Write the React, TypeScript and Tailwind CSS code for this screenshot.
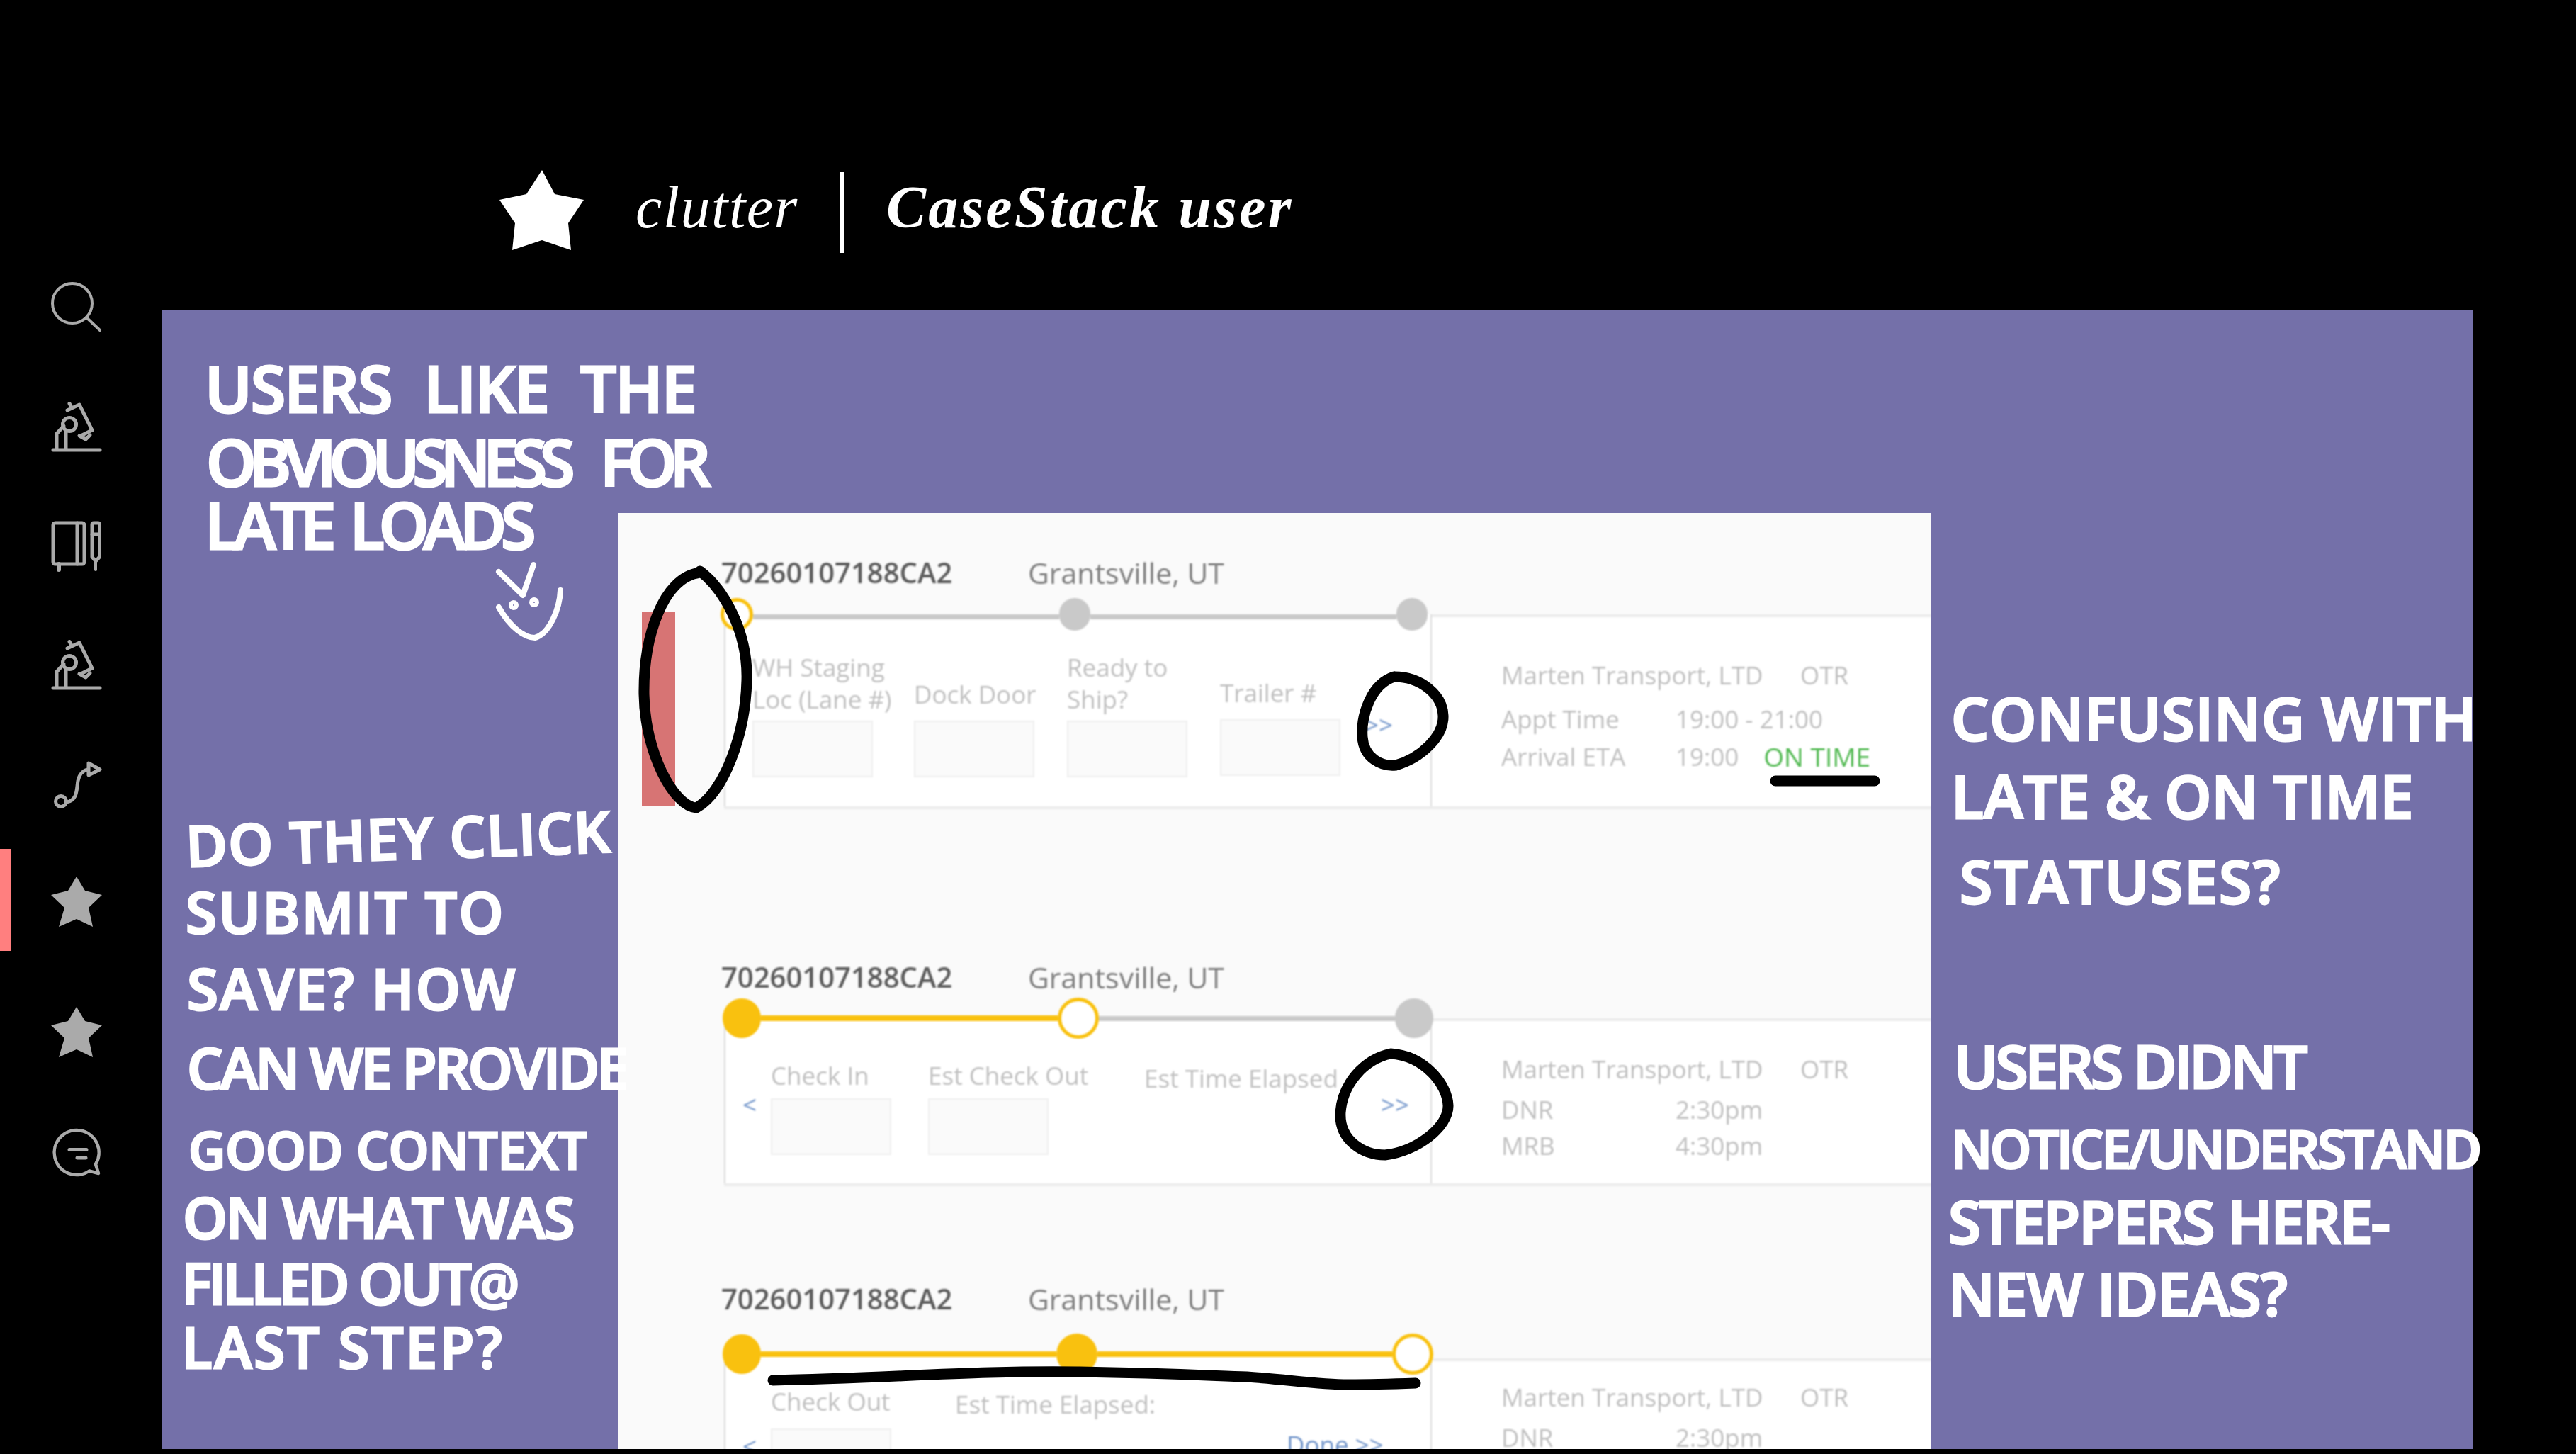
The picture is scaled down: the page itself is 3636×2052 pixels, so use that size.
import React from "react";

const Note = ({ className, children }: { className: string; children: React.ReactNode }) => (
  <div className={"absolute whitespace-nowrap leading-none font-semibold text-white font-['Open_Sans',sans-serif] [-webkit-text-stroke:3px_#ffffff] " + className}>{children}</div>
);

const Star = () => (
  <svg width="72" height="72" viewBox="0 0 72 72" className="block">
    <polygon fill="#aaaaaa" points="36,0 48,20 72,26 53,44 59,71 36,60 11,71 19,44 0,26 24,20" />
  </svg>
);

const Micro = () => (
  <svg width="72" height="72" viewBox="12 12 72 72" fill="none" stroke="#aaaaaa" strokeWidth="5" strokeLinecap="round" strokeLinejoin="round" className="block">
    <path d="M15 80H81" />
    <circle cx="38" cy="44" r="9.5" />
    <path d="M33 54V78M20 78V57L30 46" />
    <path d="M35 24L52 16L70 52L54 60" />
    <path d="M38 14.5L41 20" />
    <path d="M52 60L61 65L67 59" />
  </svg>
);

const Book = () => (
  <svg width="72" height="72" viewBox="12 180 72 72" fill="none" stroke="#aaaaaa" strokeWidth="5" strokeLinecap="round" strokeLinejoin="round" className="block">
    <rect x="15" y="183" width="44" height="58" rx="3" />
    <path d="M49 183V241" />
    <path d="M23 241V249" strokeWidth="6" />
    <path d="M70 231V185.5Q70 183 72.5 183H78Q80.5 183 80.5 185.5V231L75 237Z" />
    <path d="M70 199H80" />
    <path d="M75 237V249" strokeWidth="4" />
  </svg>
);

const Route = () => (
  <svg width="72" height="72" viewBox="12 10 72 72" fill="none" stroke="#aaaaaa" strokeWidth="5" strokeLinecap="round" strokeLinejoin="round" className="block">
    <circle cx="26" cy="69" r="7.5" />
    <path d="M34 70C50 68 48 50 50 40C52 30 58 25 64 24" />
    <path d="M65 15L81 24L65 32Z" />
  </svg>
);

const Chat = () => (
  <svg width="72" height="72" viewBox="14 10 72 72" fill="none" stroke="#aaaaaa" strokeWidth="4.5" strokeLinecap="round" strokeLinejoin="round" className="block">
    <path d="M68 71.5A31.5 31.5 0 1 1 77 62L81 75Z" />
    <path d="M40 41.5H64M51 53H63" strokeWidth="5" />
  </svg>
);

const Search = () => (
  <svg width="72" height="72" viewBox="0 0 72 72" fill="none" stroke="#aaaaaa" strokeWidth="4" strokeLinecap="round" className="block">
    <circle cx="30" cy="30" r="28" />
    <path d="M50 50L69 68" />
  </svg>
);

const Header = () => (
  <div className="flex items-center h-[40px]">
    <div className="w-[433px] text-[40px] leading-[40px] font-semibold text-[#5c5c5c]">70260107188CA2</div>
    <div className="text-[41px] leading-[40px] text-[#7d7d7d]">Grantsville, UT</div>
  </div>
);

const Dot = ({ mode, size }: { mode: "on" | "now" | "off"; size: string }) => {
  const look = mode === "on" ? "bg-[#f9c10f]" : mode === "off" ? "bg-[#c9c9c9]" : "bg-white border-[5px] border-[#f9c10f]";
  return <div className={"rounded-full shrink-0 " + size + " " + look} />;
};

const Bar = ({ on, cls }: { on: boolean; cls: string }) => (
  <div className={"flex-1 " + cls + " " + (on ? "bg-[#f9c10f]" : "bg-[#c9c9c9]")} />
);

const Label = ({ className, children }: { className?: string; children: React.ReactNode }) => (
  <div className={"text-[35px] leading-[45px] text-[#c0c0c0] whitespace-nowrap " + (className ?? "")}>{children}</div>
);

const Box = ({ className }: { className?: string }) => (
  <div className={"w-[170px] h-[80px] bg-[#fafafa] border-2 border-[#efefef] " + (className ?? "")} />
);

const Chev = ({ className, children }: { className?: string; children: React.ReactNode }) => (
  <div className={"text-[35px] leading-[36px] text-[#6f93c9] whitespace-nowrap " + (className ?? "")}>{children}</div>
);

const Info = ({ a, b, className, extra }: { a: string; b: string; className?: string; extra?: React.ReactNode }) => (
  <div className={"flex h-[44px] items-center text-[35px] leading-[44px] text-[#c0c0c0] whitespace-nowrap " + (className ?? "")}>
    <div className="w-[246px]">{a}</div>
    <div>{b}</div>
    {extra}
  </div>
);

const Carrier = ({ className }: { className?: string }) => (
  <div className={"flex h-[44px] items-center text-[35px] leading-[44px] text-[#c0c0c0] whitespace-nowrap " + (className ?? "")}>
    <div className="w-[422px]">Marten Transport, LTD</div>
    <div>OTR</div>
  </div>
);

export default function App() {
  return (
    <div className="relative w-[3636px] h-[2052px] bg-black overflow-hidden flex font-['Open_Sans',sans-serif]">
      {/* sidebar */}
      <div className="w-[228px] shrink-0 pt-[398px] pl-[72px] flex flex-col">
        <Search />
        <div className="mt-[97px]"><Micro /></div>
        <div className="mt-[96px]"><Book /></div>
        <div className="mt-[96px]"><Micro /></div>
        <div className="mt-[97px]"><Route /></div>
        <div className="mt-[93px] relative">
          <div className="absolute -left-[72px] -top-[39px] w-[16px] h-[144px] bg-[#ff7f7f]" />
          <Star />
        </div>
        <div className="mt-[112px]"><Star /></div>
        <div className="mt-[98px]"><Chat /></div>
      </div>

      <div className="w-[3263px] shrink-0 flex flex-col">
        {/* title */}
        <div className="h-[438px] shrink-0 pl-[477px] pt-[240px] flex items-start">
          <svg width="119" height="113" viewBox="0 0 119 113" className="block shrink-0">
            <polygon fill="#ffffff" points="60,0 78,34 119,42 97,75 101,113 60,99 18,113 22,75 0,42 38,34" />
          </svg>
          <div className="ml-[73px] mt-[6px] w-[289px] font-['Liberation_Serif',serif] italic text-white text-[84px] leading-[94px] tracking-[1.5px]">clutter</div>
          <div className="mt-[3px] w-[5px] h-[114px] bg-white" />
          <div className="ml-[60px] mt-[6px] font-['Liberation_Serif',serif] italic font-bold text-white text-[84px] leading-[94px] tracking-[3.2px] whitespace-nowrap">CaseStack user</div>
        </div>

        {/* purple panel */}
        <div className="h-[1607px] bg-[#7470a9] pl-[644px] pt-[286px]">
          <div className="relative w-[1854px] h-[1321px] bg-[#fafafa] overflow-hidden">
            <div className="absolute left-[34px] top-[139px] w-[47px] h-[274px] bg-[#d77474]" />

            <div className="relative blur-[1px] pl-[150px] flex flex-col">
              {/* row 1 */}
              <div className="-ml-[4px] mt-[64px]"><Header /></div>
              <div className="relative z-10 -ml-[5px] mt-[16px] w-[998px] h-[46px] flex items-center">
                <Dot mode="now" size="w-[46px] h-[46px]" />
                <Bar on={false} cls="h-[7px] mt-[6px]" />
                <Dot mode="off" size="w-[44px] h-[46px]" />
                <Bar on={false} cls="h-[7px] mt-[6px]" />
                <Dot mode="off" size="w-[44px] h-[46px]" />
              </div>
              <div className="-mt-[23px] h-[275px] flex bg-white border-b-4 border-[#ececec]">
                <div className="w-[999px] shrink-0 border-l-2 border-r-2 border-[#dcdcdc] pl-[38px] pb-[41px] flex items-end">
                  <div className="w-[228px] flex flex-col">
                    <Label>WH Staging</Label>
                    <Label className="mb-[8px]">Loc (Lane #)</Label>
                    <Box />
                  </div>
                  <div className="w-[216px] flex flex-col">
                    <Label className="mb-[15px]">Dock Door</Label>
                    <Box />
                  </div>
                  <div className="w-[216px] flex flex-col">
                    <Label>Ready to</Label>
                    <Label className="mb-[8px]">Ship?</Label>
                    <Box />
                  </div>
                  <div className="w-[204px] mb-[2px] flex flex-col">
                    <Label className="mb-[15px]">Trailer #</Label>
                    <Box />
                  </div>
                  <Chev className="mb-[56px]">&gt;&gt;</Chev>
                </div>
                <div className="flex-1 border-t-4 border-[#ececec] pl-[98px] pt-[60px]">
                  <Carrier />
                  <Info className="mt-[18px]" a="Appt Time" b="19:00 - 21:00" />
                  <Info className="mt-[9px]" a="Arrival ETA" b="19:00" extra={<div className="ml-[35px] text-[37px] text-[#4fb84f]">ON TIME</div>} />
                </div>
              </div>

              {/* row 2 */}
              <div className="-ml-[4px] mt-[217px]"><Header /></div>
              <div className="relative z-10 -ml-[2px] mt-[10px] w-[1003px] h-[56px] flex items-center">
                <Dot mode="on" size="w-[54px] h-[56px]" />
                <Bar on={true} cls="h-[8px]" />
                <Dot mode="now" size="w-[58px] h-[58px]" />
                <Bar on={false} cls="h-[7px]" />
                <Dot mode="off" size="w-[54px] h-[56px]" />
              </div>
              <div className="-mt-[28px] h-[237px] flex bg-white border-b-4 border-[#ececec]">
                <div className="w-[999px] shrink-0 border-l-2 border-r-2 border-[#dcdcdc] flex">
                  <Chev className="w-[64px] pl-[24px] mt-[104px]">&lt;</Chev>
                  <div className="w-[222px] pt-[58px]">
                    <Label className="mb-[10px]">Check In</Label>
                    <Box />
                  </div>
                  <div className="w-[305px] pt-[58px]">
                    <Label className="mb-[10px]">Est Check Out</Label>
                    <Box />
                  </div>
                  <div className="w-[334px] pt-[62px]"><Label>Est Time Elapsed</Label></div>
                  <Chev className="mt-[104px]">&gt;&gt;</Chev>
                </div>
                <div className="flex-1 border-t-4 border-[#ececec] pl-[98px] pt-[46px]">
                  <Carrier />
                  <Info className="mt-[13px]" a="DNR" b="2:30pm" />
                  <Info className="mt-[7px]" a="MRB" b="4:30pm" />
                </div>
              </div>

              {/* row 3 */}
              <div className="-ml-[4px] mt-[139px]"><Header /></div>
              <div className="relative z-10 -ml-[2px] mt-[30px] w-[1003px] h-[56px] flex items-center">
                <Dot mode="on" size="w-[54px] h-[56px]" />
                <Bar on={true} cls="h-[8px]" />
                <Dot mode="on" size="w-[58px] h-[58px]" />
                <Bar on={true} cls="h-[8px]" />
                <Dot mode="now" size="w-[58px] h-[58px]" />
              </div>
              <div className="-mt-[28px] h-[160px] flex">
                <div className="w-[999px] shrink-0 bg-white border-l-2 border-r-2 border-[#dcdcdc] flex">
                  <Chev className="w-[64px] pl-[24px] mt-[112px]">&lt;</Chev>
                  <div className="w-[260px] pt-[44px]">
                    <Label className="mb-[16px]">Check Out</Label>
                    <Box />
                  </div>
                  <div className="w-[468px] pt-[48px]"><Label>Est Time Elapsed:</Label></div>
                  <Chev className="mt-[110px] text-[#4f77b8]">Done &gt;&gt;</Chev>
                </div>
                <div className="flex-1 mt-[6px] bg-white border-t-4 border-[#ececec] pl-[98px] pt-[29px]">
                  <Carrier />
                  <Info className="mt-[13px]" a="DNR" b="2:30pm" />
                </div>
              </div>
            </div>

            {/* marker strokes */}
            <svg className="absolute left-0 top-0 z-20" width="1854" height="1321" viewBox="872 724 1854 1321" fill="none" stroke="#000000" strokeWidth="15" strokeLinecap="round" strokeLinejoin="round">
              <path d="M988 808C935 815 908 900 909 980C910 1060 950 1138 983 1140C1020 1120 1052 1040 1054 960C1056 890 1020 830 988 806" />
              <path d="M1968 955C1935 965 1921 1010 1923 1040C1925 1070 1950 1082 1970 1080C2005 1070 2038 1040 2037 1010C2036 980 2005 955 1968 955" />
              <path d="M1963 1487C1925 1495 1895 1530 1892 1570C1890 1610 1925 1630 1955 1630C2000 1625 2045 1590 2044 1560C2043 1530 2010 1490 1963 1487" />
              <path d="M2506 1102H2646" />
              <path d="M1091 1948C1250 1945 1380 1934 1520 1936C1640 1938 1700 1941 1760 1943C1820 1947 1860 1954 1903 1954C1940 1954 1970 1953 1998 1952" />
            </svg>
          </div>
        </div>
      </div>

      {/* hand-written notes */}
      <Note className="left-[289px] top-[502px] text-[90px] tracking-[-2px] [word-spacing:24px]">USERS LIKE THE</Note>
      <Note className="left-[291px] top-[606px] text-[90px] tracking-[-10px] [word-spacing:32px]">OBVIOUSNESS FOR</Note>
      <Note className="left-[289px] top-[695px] text-[90px] tracking-[-8px] [word-spacing:12px]">LATE LOADS</Note>
      <svg className="absolute left-[690px] top-[785px]" width="115" height="125" viewBox="690 785 115 125" fill="none" stroke="#ffffff" strokeWidth="8" strokeLinecap="round" strokeLinejoin="round">
        <path d="M704 807L738 840L753 797" />
        <path d="M704 857C720 885 740 900 755 900C775 895 790 860 791 833" />
        <circle cx="725" cy="854" r="3" />
        <circle cx="754" cy="850" r="3" />
      </svg>

      <Note className="left-[262px] top-[1142px] text-[80px] tracking-[1.5px] rotate-[-2deg]">DO THEY CLICK</Note>
      <Note className="left-[262px] top-[1246px] text-[80px] tracking-[2.5px]">SUBMIT TO</Note>
      <Note className="left-[264px] top-[1354px] text-[80px] tracking-[2px]">SAVE? HOW</Note>
      <Note className="left-[264px] top-[1466px] text-[80px] tracking-[-3.5px]">CAN WE PROVIDE</Note>
      <Note className="left-[266px] top-[1586px] text-[72px]">GOOD CONTEXT</Note>
      <Note className="left-[258px] top-[1677px] text-[80px] tracking-[-2px]">ON WHAT WAS</Note>
      <Note className="left-[256px] top-[1770px] text-[80px] tracking-[-4px]">FILLED OUT@</Note>
      <Note className="left-[256px] top-[1860px] text-[80px] tracking-[3px]">LAST STEP?</Note>

      <Note className="left-[2754px] top-[971px] text-[84px] tracking-[1px]">CONFUSING WITH</Note>
      <Note className="left-[2754px] top-[1081px] text-[84px] tracking-[0px]">LATE &amp; ON TIME</Note>
      <Note className="left-[2766px] top-[1201px] text-[84px] tracking-[2px]">STATUSES?</Note>
      <Note className="left-[2758px] top-[1462px] text-[84px] tracking-[-4px]">USERS DIDNT</Note>
      <Note className="left-[2754px] top-[1584px] text-[74px] tracking-[-3px]">NOTICE/UNDERSTAND</Note>
      <Note className="left-[2750px] top-[1681px] text-[84px] tracking-[-2px]">STEPPERS HERE-</Note>
      <Note className="left-[2750px] top-[1783px] text-[84px] tracking-[-1px]">NEW IDEAS?</Note>
    </div>
  );
}
